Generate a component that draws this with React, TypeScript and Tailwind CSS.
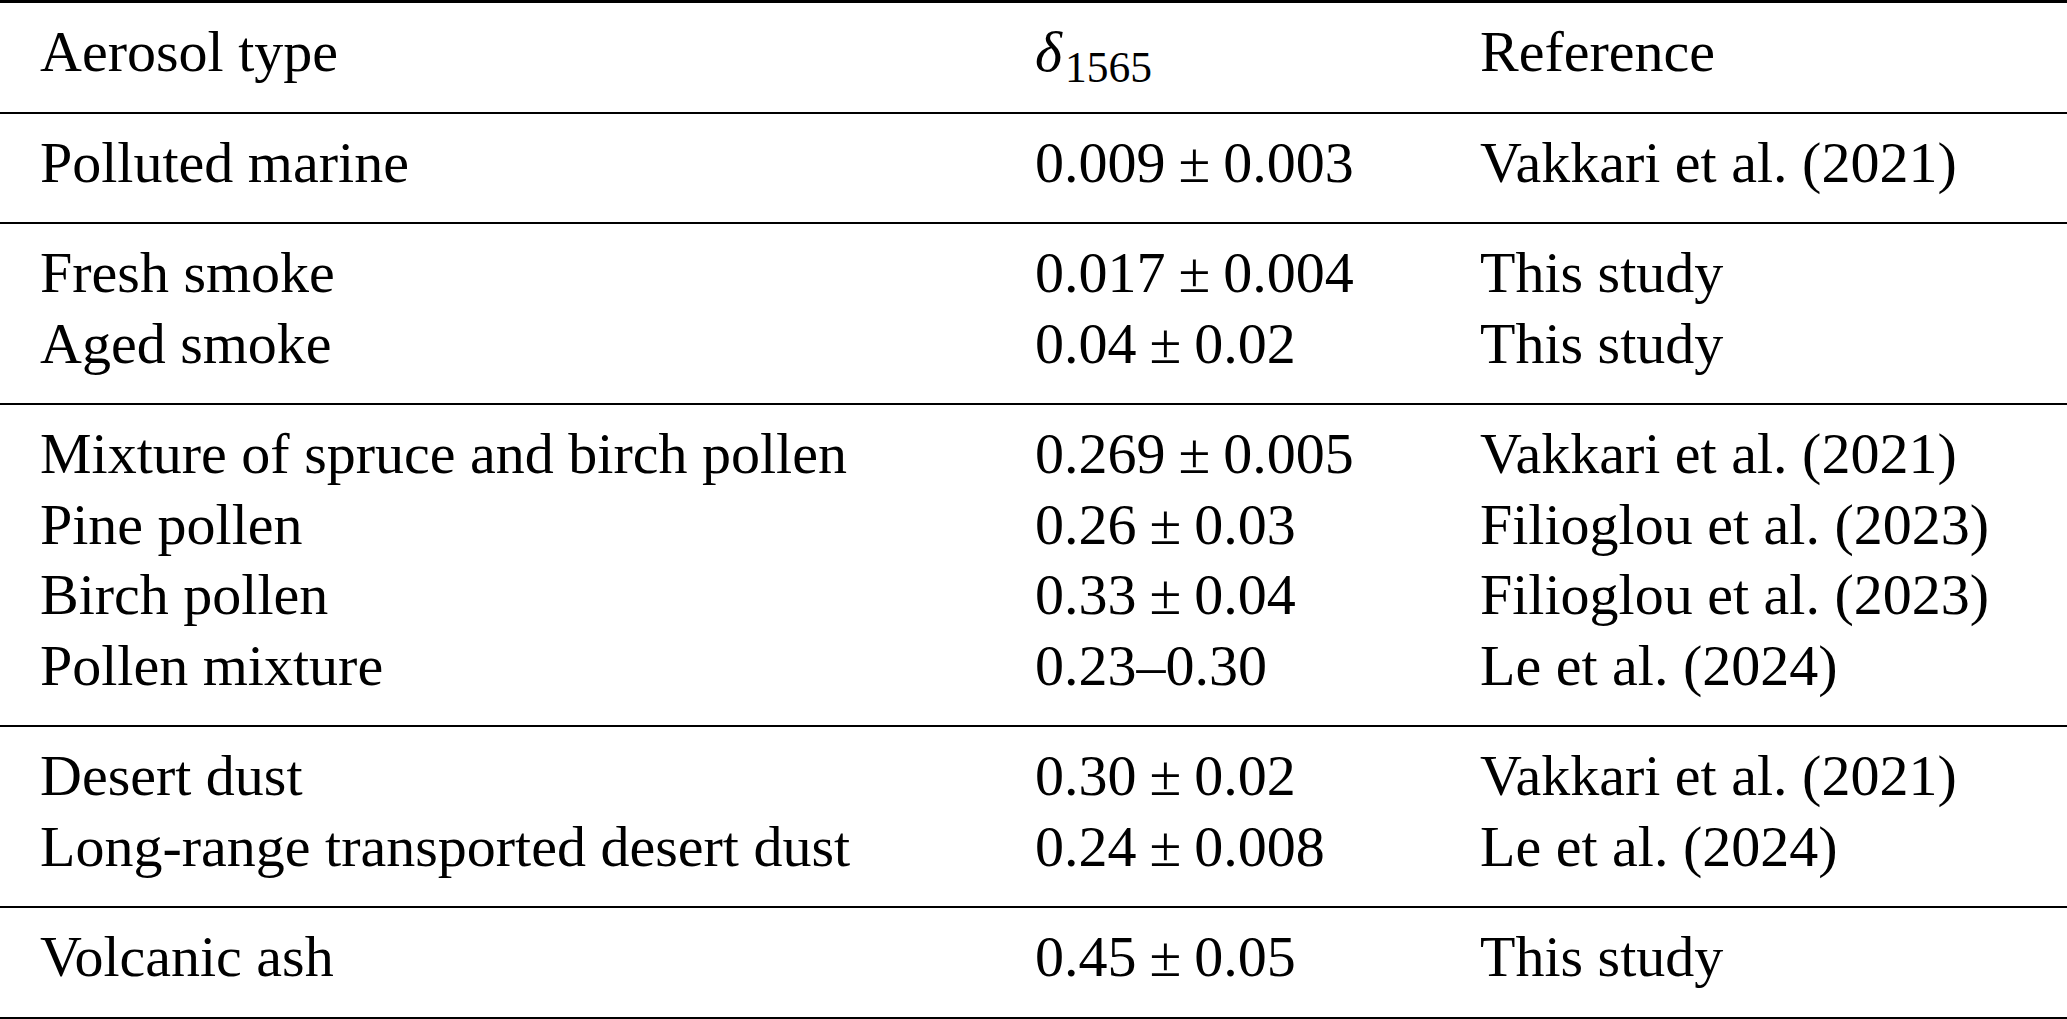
type Row = [string, string, string];

const groups: Row[][] = [
  [['Polluted marine', '0.009 ± 0.003', 'Vakkari et al. (2021)']],
  [
    ['Fresh smoke', '0.017 ± 0.004', 'This study'],
    ['Aged smoke', '0.04 ± 0.02', 'This study'],
  ],
  [
    ['Mixture of spruce and birch pollen', '0.269 ± 0.005', 'Vakkari et al. (2021)'],
    ['Pine pollen', '0.26 ± 0.03', 'Filioglou et al. (2023)'],
    ['Birch pollen', '0.33 ± 0.04', 'Filioglou et al. (2023)'],
    ['Pollen mixture', '0.23–0.30', 'Le et al. (2024)'],
  ],
  [
    ['Desert dust', '0.30 ± 0.02', 'Vakkari et al. (2021)'],
    ['Long-range transported desert dust', '0.24 ± 0.008', 'Le et al. (2024)'],
  ],
  [['Volcanic ash', '0.45 ± 0.05', 'This study']],
];

function TableRow({ cells }: { cells: Row }) {
  return (
    <div className="grid grid-cols-[995px_445px_1fr] pl-10 whitespace-nowrap">
      <div>{cells[0]}</div>
      <div className="[word-spacing:-1.5px]">{cells[1]}</div>
      <div>{cells[2]}</div>
    </div>
  );
}

export default function App() {
  return (
    <div
      className="w-[2067px] min-h-screen bg-white text-black text-[58px] leading-[70.5px]"
      style={{ fontFamily: '"Liberation Serif", "Times New Roman", serif' }}
    >
      <div className="border-t-[3px] border-black">
        <div className="pt-[14px] pb-[24px] border-b-2 border-black">
          <div className="grid grid-cols-[995px_445px_1fr] pl-10 whitespace-nowrap">
            <div>Aerosol type</div>
            <div>
              <span className="italic">δ</span>
              <sub className="ml-[3px]">1565</sub>
            </div>
            <div>Reference</div>
          </div>
        </div>

        {groups.map((group, i) => (
          <div
            key={i}
            className={
              i === groups.length - 1
                ? 'pt-[14px] pb-[24px] border-b-[3px] border-black'
                : 'pt-[14px] pb-[24px] border-b-2 border-black'
            }
          >
            {group.map((row) => (
              <TableRow key={row[0]} cells={row} />
            ))}
          </div>
        ))}
      </div>
    </div>
  );
}
